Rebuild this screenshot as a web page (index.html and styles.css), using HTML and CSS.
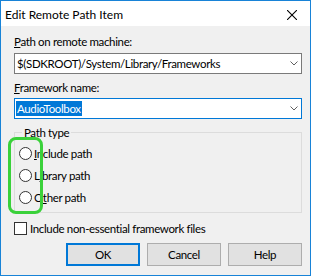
FILE: index.html
```html
<!DOCTYPE html>
<html>
<head>
<meta charset="utf-8">
<link rel="stylesheet" href="styles.css">
</head>
<body>
<div class="window">
  <div class="titlebar">
    <span class="title">Edit Remote Path Item</span>
    <svg class="close" width="10" height="10" viewBox="0 0 10 10"><path d="M0 0L10 10M10 0L0 10" stroke="#000" stroke-width="1.1"/></svg>
  </div>
  <div class="content">
    <label class="label"><u>P</u>ath on remote machine:</label>
    <div class="combo">
      <span class="combo-text">$(SDKROOT)/System/Library/Frameworks</span>
      <svg class="chev" width="8" height="5" viewBox="0 0 8 5"><path d="M0.5 0.5L4 4L7.5 0.5" stroke="#606060" fill="none"/></svg>
    </div>
    <label class="label label2"><u>F</u>ramework name:</label>
    <div class="combo combo-focus">
      <span class="combo-text"><span class="sel">AudioToolbox</span></span>
      <svg class="chev" width="8" height="5" viewBox="0 0 8 5"><path d="M0.5 0.5L4 4L7.5 0.5" stroke="#606060" fill="none"/></svg>
    </div>
    <fieldset class="group">
      <legend class="legend">Path type</legend>
      <div class="radio-row"><span class="radio"></span><span class="radio-label"><u>I</u>nclude path</span></div>
      <div class="radio-row"><span class="radio"></span><span class="radio-label">L<u>i</u>brary path</span></div>
      <div class="radio-row"><span class="radio"></span><span class="radio-label">O<u>t</u>her path</span></div>
    </fieldset>
    <div class="check-row"><span class="checkbox"></span><span class="check-label">Include non-essential framework files</span></div>
    <div class="buttons">
      <button class="btn btn-default">OK</button>
      <button class="btn">Cancel</button>
      <button class="btn">Help</button>
    </div>
  </div>
  <div class="annot"></div>
</div>
</body>
</html>
```
FILE: styles.css
```css
body {
  margin: 0;
  font-family: Lato, "Liberation Sans", sans-serif;
  font-size: 11.5px;
  letter-spacing: -0.35px;
  color: #000;
}
.window {
  position: relative;
  width: 311px;
  height: 276px;
  box-sizing: border-box;
  border: 1px solid #1883d7;
  background: #f0f0f0;
  display: flex;
  flex-direction: column;
}
.titlebar {
  height: 25px;
  background: #fff;
  display: flex;
  align-items: center;
  justify-content: space-between;
  padding: 0 13px 0 4px;
}
.title {
  font-size: 12px;
  letter-spacing: 0;
  line-height: 15px;
  padding-top: 1px;
}
.close {
  display: block;
  margin-top: 2px;
}
.content {
  display: flex;
  flex-direction: column;
  padding: 8px 8px 0 13px;
}
.label {
  display: block;
  height: 15px;
  line-height: 15px;
}
.label2 {
  margin-top: 6px;
}
.combo {
  margin-top: 4px;
  height: 21px;
  box-sizing: border-box;
  border: 1px solid #7a7a7a;
  background: #fff;
  display: flex;
  align-items: center;
  justify-content: space-between;
  padding: 0 3px 0 2px;
}
.combo-focus {
  margin-top: 3px;
  border-color: #0078d7;
  padding-left: 1px;
}
.combo-text {
  line-height: 15px;
  white-space: nowrap;
}
.sel {
  background: #0078d7;
  color: #fff;
  padding: 0 1px;
  display: inline-block;
  line-height: 15px;
}
.chev {
  display: block;
}
.group {
  margin: 6px 0 0 0;
  padding: 2px 0 4px 0;
  border: 1px solid #dcdcdc;
  min-width: 0;
}
.legend {
  margin-left: 7px;
  padding: 0 2px;
  line-height: 15px;
}
.radio-row {
  height: 22px;
  display: flex;
  align-items: center;
  padding-left: 4px;
}
.radio {
  width: 13px;
  height: 13px;
  box-sizing: border-box;
  border: 1px solid #333;
  border-radius: 50%;
  background: #fff;
  margin-right: 2px;
}
.radio-label {
  line-height: 15px;
}
.check-row {
  margin-top: 8px;
  height: 15px;
  display: flex;
  align-items: center;
}
.checkbox {
  width: 13px;
  height: 13px;
  box-sizing: border-box;
  border: 1px solid #333;
  background: #fff;
  margin-right: 3px;
}
.check-label {
  line-height: 15px;
}
.buttons {
  margin-top: 7px;
  display: flex;
  justify-content: flex-end;
  gap: 7px;
}
.btn {
  width: 74px;
  height: 23px;
  box-sizing: border-box;
  border: 1px solid #adadad;
  background: #e1e1e1;
  font-family: inherit;
  font-size: 11.5px;
  letter-spacing: -0.35px;
  color: #000;
  padding: 0;
  margin: 0;
}
.btn-default {
  border: 2px solid #0078d7;
}
.annot {
  position: absolute;
  left: 7px;
  top: 136px;
  width: 35px;
  height: 77px;
  box-sizing: border-box;
  border: 3px solid #3ad13a;
  border-radius: 8px;
}
```
